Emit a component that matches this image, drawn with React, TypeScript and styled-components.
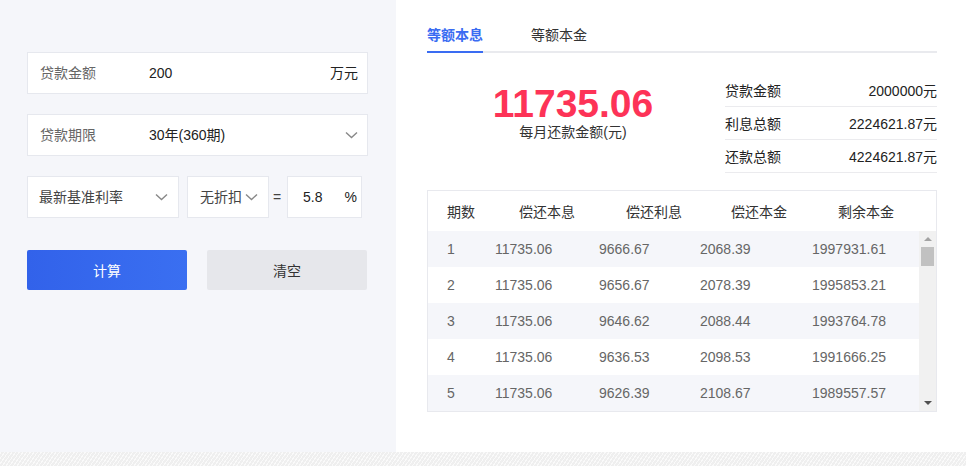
import styled, { createGlobalStyle } from "styled-components";

const GlobalStyle = createGlobalStyle`
	html, body {
		margin: 0;
		height: 100%;
	}
	body {
		font-family: "Liberation Sans", "Noto Sans CJK SC", sans-serif;
		font-size: 14px;
		background: #fff;
	}
	#root {
		height: 100%;
	}
`

const Page = styled.div`
	height: 100vh;
	display: flex;
	flex-direction: column;
`

const Main = styled.div`
	height: 452px;
	display: flex;
`

const Footer = styled.div`
	flex: 1;
	background-color: #efefef;
	background-image: repeating-linear-gradient(-55deg, rgba(255, 255, 255, 0.7) 0 1px, transparent 1px 3px);
`

const LeftPanel = styled.div`
	width: 396px;
	box-sizing: border-box;
	background: #f5f6fa;
	padding: 52px 0 0 27px;
`

const Field = styled.div`
	width: 341px;
	height: 42px;
	box-sizing: border-box;
	display: flex;
	align-items: center;
	background: #fff;
	border: 1px solid #e6e8ee;
	padding: 0 9px 0 12px;
	margin-bottom: 20px;
	line-height: 20px;
`

const Label = styled.span`
	width: 109px;
	color: #666;
`

const Value = styled.span`
	flex: 1;
	color: #222;
`

const Unit = styled.span`
	color: #222;
`

const RateRow = styled.div`
	display: flex;
	align-items: center;
	height: 42px;
	line-height: 20px;
`

const Select = styled.div<{ $w: number; $pl: number; $mr: number }>`
	width: ${(p) => p.$w}px;
	height: 42px;
	box-sizing: border-box;
	display: flex;
	align-items: center;
	justify-content: space-between;
	background: #fff;
	border: 1px solid #e6e8ee;
	padding: 0 10px 0 ${(p) => p.$pl}px;
	margin-right: ${(p) => p.$mr}px;
	color: #444;
`

const Eq = styled.span`
	width: 10px;
	margin-right: 4px;
	color: #444;
`

const RateInput = styled.div`
	width: 75px;
	height: 42px;
	box-sizing: border-box;
	display: flex;
	align-items: center;
	justify-content: space-between;
	background: #fff;
	border: 1px solid #e6e8ee;
	padding: 0 4px 0 15px;
	color: #222;
`

const Buttons = styled.div`
	display: flex;
	gap: 20px;
	margin-top: 32px;
`

const Button = styled.button<{ $primary?: boolean }>`
	width: 160px;
	height: 40px;
	border: none;
	border-radius: 2px;
	font-family: inherit;
	font-size: 14px;
	color: ${(p) => (p.$primary ? "#fff" : "#333")};
	background: ${(p) => (p.$primary ? "linear-gradient(90deg, #3262ea, #3a6ff1)" : "#e6e7eb")};
`

const RightPanel = styled.div`
	flex: 1;
	box-sizing: border-box;
	padding: 24px 29px 0 31px;
`

const Tabs = styled.div`
	display: flex;
	gap: 48px;
	border-bottom: 2px solid #e9eaee;
`

const Tab = styled.div<{ $active?: boolean }>`
	line-height: 22px;
	padding-bottom: 5px;
	margin-bottom: -2px;
	border-bottom: 2px solid ${(p) => (p.$active ? "#3a6cf2" : "transparent")};
	color: ${(p) => (p.$active ? "#3a6cf2" : "#333")};
	font-weight: ${(p) => (p.$active ? 600 : 400)};
`

const Summary = styled.div`
	display: flex;
	margin-top: 21px;
`

const Monthly = styled.div`
	flex: 1;
	display: flex;
	flex-direction: column;
	align-items: center;
	padding-top: 10px;
	padding-right: 6px;
`

const BigNumber = styled.div`
	font-size: 39px;
	line-height: 39px;
	font-weight: 700;
	color: #fd3357;
`

const Caption = styled.div`
	line-height: 18px;
	color: #333;
`

const Stats = styled.div`
	width: 212px;
`

const StatRow = styled.div`
	height: 33px;
	box-sizing: border-box;
	display: flex;
	align-items: center;
	justify-content: space-between;
	border-bottom: 1px solid #ebebee;
	color: #222;
	padding-bottom: 1px;
`

const Table = styled.div`
	margin-top: 17px;
	border: 1px solid #e8e9ee;
`

const Head = styled.div`
	height: 40px;
	display: grid;
	grid-template-columns: 72px 107px 105px 107px 1fr;
	align-items: center;
	padding-left: 19px;
	color: #333;
`

const Body = styled.div`
	display: flex;
	height: 180px;
`

const Rows = styled.div`
	flex: 1;
	overflow: hidden;
`

const Row = styled.div<{ $striped: boolean }>`
	height: 36px;
	display: grid;
	grid-template-columns: 48px 104px 101px 112px 1fr;
	align-items: center;
	padding-left: 19px;
	color: #666;
	background: ${(p) => (p.$striped ? "#f5f6fa" : "#fff")};
`

const Scrollbar = styled.div`
	width: 17px;
	background: #f1f1f1;
	display: flex;
	flex-direction: column;
	align-items: center;
`

const Arrow = styled.div<{ $down?: boolean }>`
	height: 16px;
	display: flex;
	align-items: center;
	justify-content: center;
	margin-top: ${(p) => (p.$down ? "auto" : "0")};

	&::before {
		content: "";
		border-left: 4px solid transparent;
		border-right: 4px solid transparent;
		${(p) =>
			p.$down
				? "border-top: 4px solid #505050;"
				: "border-bottom: 4px solid #a3a3a3;"}
	}
`

const Thumb = styled.div`
	width: 13px;
	height: 19px;
	background: #c1c1c1;
`

const Chevron = () => (
	<svg width="13" height="8" viewBox="0 0 13 8" fill="none">
		<polyline points="1,1.5 6.5,6.5 12,1.5" stroke="#888" strokeWidth="1.4" />
	</svg>
);

const rows = [
	["1", "11735.06", "9666.67", "2068.39", "1997931.61"],
	["2", "11735.06", "9656.67", "2078.39", "1995853.21"],
	["3", "11735.06", "9646.62", "2088.44", "1993764.78"],
	["4", "11735.06", "9636.53", "2098.53", "1991666.25"],
	["5", "11735.06", "9626.39", "2108.67", "1989557.57"],
];

const stats = [
	["贷款金额", "2000000元"],
	["利息总额", "2224621.87元"],
	["还款总额", "4224621.87元"],
];

const App = () => {
	return (
		<Page>
			<GlobalStyle />
			<Main>
				<LeftPanel>
					<Field>
						<Label>贷款金额</Label>
						<Value>200</Value>
						<Unit>万元</Unit>
					</Field>
					<Field>
						<Label>贷款期限</Label>
						<Value>30年(360期)</Value>
						<Chevron />
					</Field>
					<RateRow>
						<Select $w={152} $pl={11} $mr={8}>
							最新基准利率
							<Chevron />
						</Select>
						<Select $w={82} $pl={12} $mr={4}>
							无折扣
							<Chevron />
						</Select>
						<Eq>=</Eq>
						<RateInput>
							<span>5.8</span>
							<span>%</span>
						</RateInput>
					</RateRow>
					<Buttons>
						<Button $primary>计算</Button>
						<Button>清空</Button>
					</Buttons>
				</LeftPanel>
				<RightPanel>
					<Tabs>
						<Tab $active>等额本息</Tab>
						<Tab>等额本金</Tab>
					</Tabs>
					<Summary>
						<Monthly>
							<BigNumber>11735.06</BigNumber>
							<Caption>每月还款金额(元)</Caption>
						</Monthly>
						<Stats>
							{stats.map(([k, v]) => (
								<StatRow key={k}>
									<span>{k}</span>
									<span>{v}</span>
								</StatRow>
							))}
						</Stats>
					</Summary>
					<Table>
						<Head>
							<span>期数</span>
							<span>偿还本息</span>
							<span>偿还利息</span>
							<span>偿还本金</span>
							<span>剩余本金</span>
						</Head>
						<Body>
							<Rows>
								{rows.map((r, i) => (
									<Row key={r[0]} $striped={i % 2 === 0}>
										{r.map((c, j) => (
											<span key={j}>{c}</span>
										))}
									</Row>
								))}
							</Rows>
							<Scrollbar>
								<Arrow />
								<Thumb />
								<Arrow $down />
							</Scrollbar>
						</Body>
					</Table>
				</RightPanel>
			</Main>
			<Footer />
		</Page>
	);
}

export default App;
